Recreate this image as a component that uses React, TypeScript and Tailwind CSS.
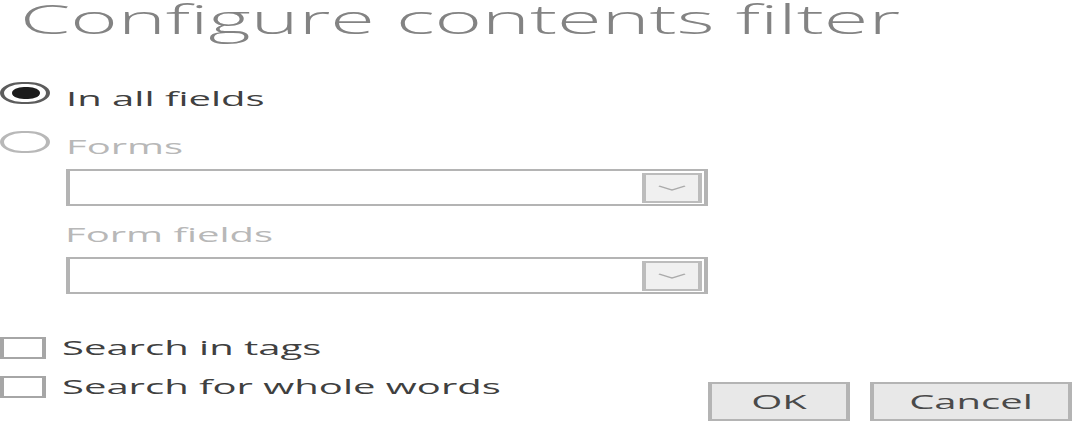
import React from "react";

function Radio({ checked, disabled }: { checked?: boolean; disabled?: boolean }) {
  return (
    <span
      className={`flex h-[22px] w-[25px] shrink-0 items-center justify-center rounded-full border-2 bg-white ${
        disabled ? "border-[#b8b8b8]" : "border-[#5c5c5c]"
      }`}
    >
      {checked && <span className="h-[12px] w-[14px] rounded-full bg-[#1c1c1c]" />}
    </span>
  );
}

function Select() {
  return (
    <div className="ml-[32.5px] flex h-[37px] w-[321px] items-center justify-end border-2 border-[#b4b4b4] bg-white pr-[1px]">
      <div className="flex h-[30px] w-[30px] items-center justify-center border-2 border-[#bcbcbc] bg-[#f0f0f0]">
        <svg width="16" height="8" viewBox="0 0 16 8" fill="none">
          <path d="M1.5 2 L8 6 L14.5 2" stroke="#ababab" strokeWidth="1.2" />
        </svg>
      </div>
    </div>
  );
}

function Check({ label }: { label: string }) {
  return (
    <div className="flex items-center">
      <span className="h-[22px] w-[22.5px] shrink-0 border-2 border-[#a6a6a6] bg-white" />
      <span className="ml-[8.5px] text-[20px] leading-[28px] text-[#404040]">{label}</span>
    </div>
  );
}

export default function App() {
  return (
    <div className="h-[422px] w-[1080px] overflow-hidden bg-white">
      <div
        className="h-[422px] w-[540px] origin-top-left scale-x-200 bg-white"
        style={{ fontFamily: '"Open Sans", "Noto Sans", sans-serif' }}
      >
        <h1 className="pl-[10px] pt-[1px] text-[40.6px] font-light leading-[36px] text-[#838383]">
          Configure contents filter
        </h1>

        <div className="mt-[45px] flex items-start">
          <Radio checked />
          <span className="ml-[8px] mt-[3px] text-[20px] leading-[28px] text-[#404040]">In all fields</span>
        </div>
        <div className="mt-[18px] flex items-start">
          <Radio disabled />
          <span className="ml-[8px] mt-[2px] text-[20px] leading-[28px] text-[#b8b8b8]">Forms</span>
        </div>

        <div className="mt-[8px]">
          <Select />
        </div>
        <p className="ml-[32.5px] mt-[15px] text-[20px] leading-[28px] text-[#b8b8b8]">Form fields</p>
        <div className="mt-[8px]">
          <Select />
        </div>

        <div className="mt-[40px] flex items-start justify-between pr-[4px]">
          <div className="flex flex-col gap-[11px]">
            <Check label="Search in tags" />
            <Check label="Search for whole words" />
          </div>
          <div className="mt-[48px] flex gap-[10px]">
            <button className="h-[39px] w-[71px] border-2 border-[#b4b4b4] bg-[#e8e8e8] text-[20px] leading-none text-[#4a4a4a]">
              OK
            </button>
            <button className="h-[39px] w-[101px] border-2 border-[#b4b4b4] bg-[#e8e8e8] text-[20px] leading-none text-[#4a4a4a]">
              Cancel
            </button>
          </div>
        </div>
      </div>
    </div>
  );
}
